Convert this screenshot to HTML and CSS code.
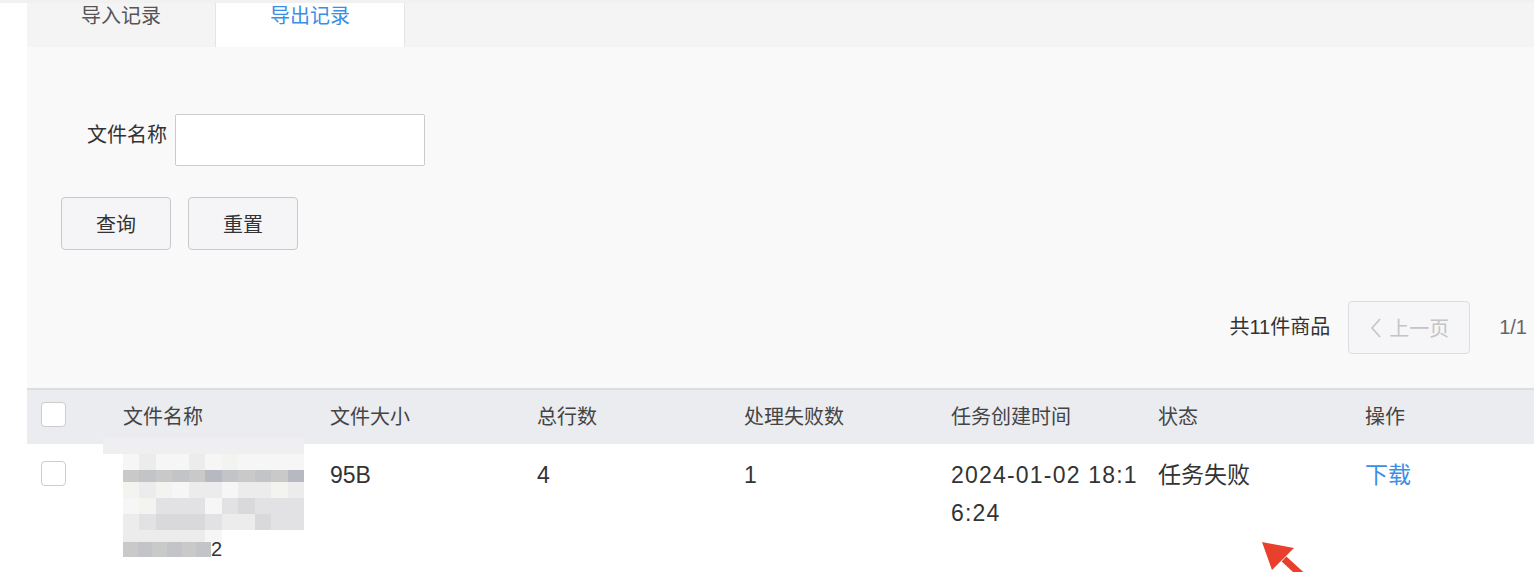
FILE: index.html
```html
<!DOCTYPE html>
<html>
<head>
    <meta charset="utf-8">
    <meta name="viewport" content="width=device-width, initial-scale=1.0">
    <title>导出记录</title>
    <link rel="stylesheet" href="styles.css">
</head>
<body>
    <div class="page">
        <div class="tabs">
            <div class="tab">导入记录</div>
            <div class="tab active">导出记录</div>
        </div>

        <div class="panel">
            <div class="search">
                <div class="field">
                    <label for="fileName">文件名称</label>
                    <input type="text" id="fileName">
                </div>
                <div class="actions">
                    <button class="btn">查询</button>
                    <button class="btn">重置</button>
                </div>
            </div>

            <div class="pager">
                <span class="total">共11件商品</span>
                <button class="prev" disabled>
                    <svg width="14" height="22" viewBox="0 0 14 22"><path d="M11 2 L3 11 L11 20" fill="none" stroke="#c4c4c4" stroke-width="1.6"/></svg>
                    上一页
                </button>
                <span class="pages">1/1</span>
            </div>

            <div class="table">
                <div class="row head">
                    <div class="cell"><span class="check"></span></div>
                    <div class="cell">文件名称</div>
                    <div class="cell">文件大小</div>
                    <div class="cell">总行数</div>
                    <div class="cell">处理失败数</div>
                    <div class="cell">任务创建时间</div>
                    <div class="cell">状态</div>
                    <div class="cell">操作</div>
                </div>
                <div class="row">
                    <div class="cell"><span class="check"></span></div>
                    <div class="cell name">
                        <!-- file name is masked -->
                        <div class="mosaic">
                            <div class="band"></div>
                            <div class="m r1"><i class="a"></i><i class="b"></i><i class="a"></i><i class="a"></i><i class="b"></i><i class="a"></i><i class="c"></i><i class="a"></i><i class="a"></i><i class="a"></i><i class="a"></i></div>
                            <div class="m r2"><i class="d"></i><i class="e"></i><i class="d"></i><i class="e"></i><i class="d"></i><i class="f"></i><i class="e"></i><i class="d"></i><i class="e"></i><i class="d"></i><i class="f"></i></div>
                            <div class="m r3"><i class="c"></i><i class="b"></i><i class="c"></i><i class="a"></i><i class="b"></i><i class="b"></i><i class="a"></i><i class="b"></i><i class="b"></i><i class="c"></i><i class="b"></i></div>
                            <div class="m r3"><i class="a"></i><i class="c"></i><i class="g"></i><i class="g"></i><i class="g"></i><i class="a"></i><i class="g"></i><i class="h"></i><i class="g"></i><i class="g"></i><i class="g"></i></div>
                            <div class="m r3"><i class="b"></i><i class="g"></i><i class="h"></i><i class="h"></i><i class="h"></i><i class="g"></i><i class="b"></i><i class="b"></i><i class="h"></i><i class="g"></i><i class="g"></i></div>
                            <div class="m r4"><i class="b"></i><i class="b"></i><i class="b"></i><i class="b"></i><i class="b"></i><i class="a"></i><i class="w"></i><i class="w"></i><i class="w"></i><i class="w"></i><i class="w"></i></div>
                            <div class="tail"><span class="m r5"><i class="d"></i><i class="e"></i><i class="d"></i><i class="e"></i><i class="d"></i><i class="e"></i></span>2</div>
                        </div>
                    </div>
                    <div class="cell">95B</div>
                    <div class="cell">4</div>
                    <div class="cell">1</div>
                    <div class="cell date">2024-01-02 18:16:24</div>
                    <div class="cell">任务失败</div>
                    <div class="cell"><a href="#" class="link">下载</a></div>
                </div>
            </div>
        </div>

        <svg class="arrow" width="70" height="50" viewBox="0 0 70 50">
            <path d="M60 50 L24 17" stroke="#e8402c" stroke-width="7" fill="none"/>
            <path d="M2 0 L34 6 L12 28 Z" fill="#e8402c"/>
        </svg>
    </div>
</body>
</html>
```

FILE: styles.css
```css
body { margin: 0; font-family: "Liberation Sans", Roboto, "Noto Sans CJK SC", sans-serif; color: #333; background: #fff; }
.page { position: relative; height: 572px; overflow: hidden; border-top: 3px solid #f1f1f1; box-sizing: border-box; }

.tabs { display: flex; margin-left: 27px; height: 44px; background: #f4f4f4; }
.tab { width: 188px; line-height: 26px; text-align: center; font-size: 20px; color: #555; }
.tab.active { background: #fff; color: #3a8ee6; border-left: 1px solid #e4e4e4; border-right: 1px solid #e4e4e4; }

.panel { margin-left: 27px; background: #f9f9f9; }
.search { padding: 67px 0 18px 34px; height: 203px; box-sizing: border-box; }
.field { display: flex; align-items: flex-start; gap: 8px; margin-left: 26px; }
.field label { font-size: 20px; padding-top: 5px; }
.field input { width: 250px; height: 52px; box-sizing: border-box; border: 1px solid #ccc; border-radius: 2px; background: #fff; }
.actions { display: flex; gap: 17px; margin-top: 31px; }
.btn { width: 110px; height: 53px; border: 1px solid #c9c9cc; border-radius: 4px; background: #f5f5f7; font-family: inherit; font-size: 20px; color: #333; }

.pager { display: flex; justify-content: flex-end; align-items: flex-start; height: 138px; padding: 51px 7px 0 0; box-sizing: border-box; line-height: 53px; font-size: 20px; }
.total { margin-right: 18px; }
.prev { display: flex; align-items: center; gap: 6px; width: 122px; height: 53px; padding-left: 20px; border: 1px solid #ddd; border-radius: 4px; background: #f6f6f8; color: #c4c4c4; font-family: inherit; font-size: 20px; }
.pages { color: #666; margin-left: 29px; }

.table { background: #fff; }
.row { display: grid; grid-template-columns: 86px repeat(6, 207px) 1fr; }
.row.head { background: #ebecf0; border-top: 2px solid #dcdde0; height: 56px; box-sizing: border-box; font-size: 20px; color: #444; }
.head .cell { display: flex; align-items: center; }
.cell { padding: 12px 10px 0; line-height: 38px; font-size: 23px; box-sizing: border-box; }
.head .cell { padding-top: 0; font-size: 20px; }
.cell:first-child { padding-left: 14px; }
.date { word-break: break-all; letter-spacing: 1.2px; padding-right: 6px; }
.check { display: inline-block; width: 25px; height: 25px; border: 1px solid #ccc; border-radius: 4px; background: #fff; box-sizing: border-box; vertical-align: middle; }
.head .check { margin-top: 2px; }
.row .cell:first-child .check { margin-top: -6px; }
.link { color: #3a8ee6; text-decoration: none; }

.name { padding-top: 0; }
.mosaic { margin-top: -6px; width: 181px; line-height: 0; }
.band { height: 16px; margin-left: -20px; width: 201px; background: #efeff1; }
.m { display: flex; }
.m i { flex: 1; }
.r1 { height: 16px; }
.r2 { height: 12px; }
.r3 { height: 16px; }
.r4 { height: 12px; }
.r5 { height: 15px; width: 88px; }
.tail { display: flex; align-items: flex-end; font-size: 20px; line-height: 15px; color: #333; }
.m .a { background: #f6f6f6; }
.m .b { background: #ececed; }
.m .c { background: #f3f3f0; }
.m .d { background: #c9c9ca; }
.m .e { background: #c2c4c7; }
.m .f { background: #b6b9c0; }
.m .g { background: #e2e2e4; }
.m .h { background: #d9d9dc; }
.m .w { background: transparent; }

.arrow { position: absolute; left: 1260px; top: 539px; }
```
